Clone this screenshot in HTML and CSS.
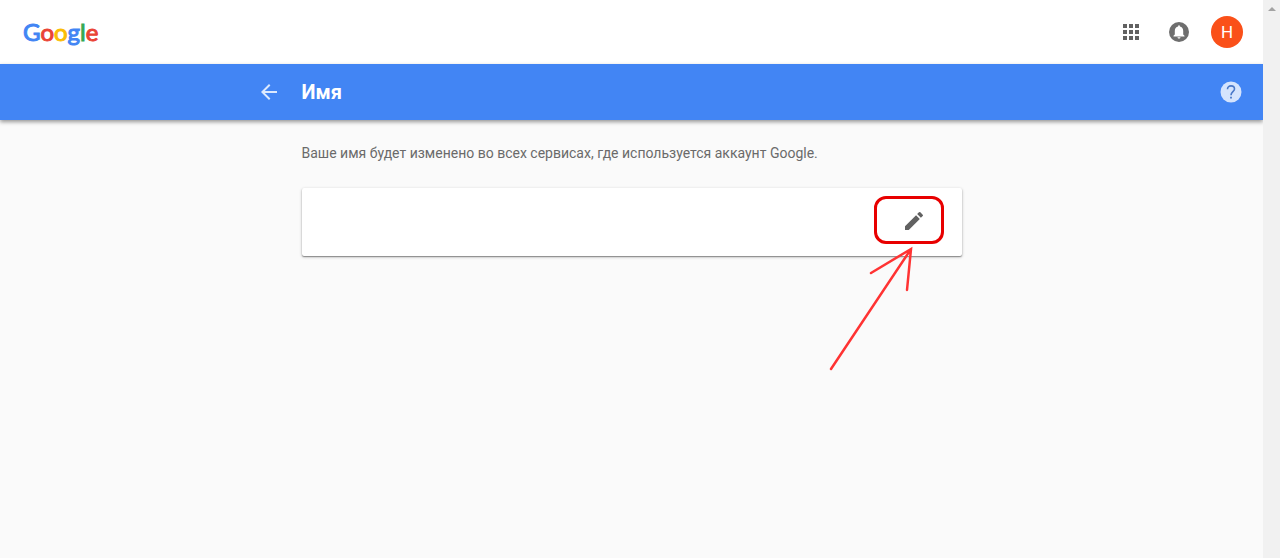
FILE: index.html
```html
<!DOCTYPE html>
<html lang="ru">
<head>
    <meta charset="UTF-8">
    <meta name="viewport" content="width=device-width, initial-scale=1.0">
    <title>Имя</title>
    <link rel="stylesheet" href="styles.css">
</head>
<body>
    <div class="page">
        <header class="topbar">
            <a href="#" class="logo"><span class="blue">G</span><span class="red">o</span><span class="yellow">o</span><span class="blue">g</span><span class="green">l</span><span class="red">e</span></a>
            <div class="topbar-actions">
                <button type="button" class="icon-btn" aria-label="Приложения">
                    <svg width="24" height="24" viewBox="0 0 24 24" fill="#616161">
                        <path d="M4 4h4v4H4zM10 4h4v4h-4zM16 4h4v4h-4zM4 10h4v4H4zM10 10h4v4h-4zM16 10h4v4h-4zM4 16h4v4H4zM10 16h4v4h-4zM16 16h4v4h-4z"/>
                    </svg>
                </button>
                <button type="button" class="icon-btn" aria-label="Уведомления">
                    <svg width="24" height="24" viewBox="0 0 24 24">
                        <circle cx="12" cy="12" r="10" fill="#6e6e6e"/>
                        <path fill="#fff" d="M12 18.5c.9 0 1.5-.5 1.5-1.3h-3c0 .8.6 1.3 1.5 1.3zM16.2 14.6V11c0-2.300-1.200-3.900-3.300-4.400v-.4a.9.9 0 0 0-1.800 0v.4C9 7.100 7.800 8.700 7.800 11v3.600l-1.300 1.200v.6h11v-.6z"/>
                    </svg>
                </button>
                <button type="button" class="avatar" aria-label="Аккаунт">Н</button>
            </div>
        </header>

        <div class="titlebar">
            <div class="titlebar-inner">
                <a href="#" class="back" aria-label="Назад">
                    <svg width="24" height="24" viewBox="0 0 24 24" fill="#dce9fe">
                        <path d="M20 11H7.830l5.590-5.590L12 4l-8 8 8 8 1.410-1.410L7.830 13H20v-2z"/>
                    </svg>
                </a>
                <h1 class="title">Имя</h1>
            </div>
            <button type="button" class="help" aria-label="Справка">
                <svg width="24" height="24" viewBox="0 0 24 24">
                    <circle cx="12" cy="12" r="10.500" fill="#d5e4fd"/>
                    <path fill="none" stroke="#4a78c8" stroke-width="1.600" d="M8.500 9.300C8.500 7.100 10 5.900 12 5.900s3.500 1.200 3.500 3.100c0 2.600-3.500 2.900-3.500 6.200"/>
                    <path fill="#4a78c8" d="M11.100 16.800h1.800v1.800h-1.800z"/>
                </svg>
            </button>
        </div>

        <main class="content">
            <p class="intro">Ваше имя будет изменено во всех сервисах, где используется аккаунт Google.</p>
            <div class="card">
                <button type="button" class="icon-btn" aria-label="Изменить имя">
                    <svg width="24" height="24" viewBox="0 0 24 24" fill="#616161">
                        <path d="M3 17.250V21h3.750L17.810 9.940l-3.750-3.750L3 17.250zM20.710 7.040a1 1 0 0 0 0-1.410l-2.340-2.340a1 1 0 0 0-1.410 0l-1.830 1.830 3.750 3.750 1.830-1.830z"/>
                    </svg>
                </button>
                <div class="mark-box"></div>
                <svg class="mark-arrow" width="90" height="130" viewBox="0 0 90 130" fill="none" stroke="#ff3333" stroke-width="2.500" stroke-linecap="round">
                    <path d="M4 125L84 5M44 29L84 5L80 46"/>
                </svg>
            </div>
        </main>
    </div>
    <div class="scrollbar"></div>
</body>
</html>
```

FILE: styles.css
```css
* {
    box-sizing: border-box;
}

body {
    display: flex;
    min-height: 100vh;
    margin: 0;
    background-color: #fafafa;
    font-family: Roboto, Arial, sans-serif;
}

svg {
    display: block;
}

button {
    padding: 0;
    border: 0;
    background: none;
    font-family: inherit;
    cursor: pointer;
}

.page {
    flex: 1;
    min-width: 0;
}

/* Top bar */
.topbar {
    display: flex;
    justify-content: space-between;
    align-items: center;
    height: 64px;
    padding: 0 20px 0 23px;
    background: #fff;
}

.logo {
    font-family: Lato, sans-serif;
    font-size: 24px;
    line-height: 32px;
    text-decoration: none;
}

.blue {
    color: #4285f4;
}

.red {
    color: #ea4335;
}

.yellow {
    color: #fbbc05;
}

.green {
    color: #34a853;
}

.logo span {
    -webkit-text-stroke: 1px currentColor;
}

.topbar-actions {
    display: flex;
    align-items: center;
}

.icon-btn {
    display: flex;
    justify-content: center;
    align-items: center;
    width: 48px;
    height: 48px;
}

.avatar {
    width: 32px;
    height: 32px;
    margin-left: 8px;
    border-radius: 50%;
    background: #fa5019;
    color: #fff;
    font-size: 17px;
    line-height: 32px;
}

/* Blue title bar */
.titlebar {
    position: relative;
    height: 56px;
    background: #4285f4;
    box-shadow: 0 2px 4px rgba(0, 0, 0, 0.4);
}

.titlebar-inner {
    display: flex;
    align-items: center;
    max-width: 660px;
    height: 100%;
    margin: 0 auto;
}

.back {
    margin-left: -45px;
}

.title {
    margin: 0 0 0 21px;
    color: #fff;
    font-size: 20px;
    font-weight: 700;
    line-height: 24px;
}

.help {
    position: absolute;
    top: 16px;
    right: 20px;
}

/* Content */
.content {
    max-width: 660px;
    margin: 0 auto;
    padding-top: 24px;
}

.intro {
    margin: 0 0 26px;
    color: #6a6a6a;
    font-size: 14px;
    line-height: 18px;
}

.card {
    position: relative;
    display: flex;
    justify-content: flex-end;
    align-items: center;
    height: 68px;
    padding: 0 24px 2px 0;
    border-radius: 2px;
    background: #fff;
    box-shadow: 0 1px 3px rgba(0, 0, 0, 0.3), 0 1px 1px rgba(0, 0, 0, 0.3);
}

/* Red marks over the edit button */
.mark-box {
    position: absolute;
    top: 8px;
    right: 18px;
    width: 70px;
    height: 48px;
    border: 3px solid #e80000;
    border-radius: 12px;
    pointer-events: none;
}

.mark-arrow {
    position: absolute;
    top: 56px;
    right: 45px;
    pointer-events: none;
}

/* Scrollbar track */
.scrollbar {
    position: relative;
    width: 17px;
    background: #f1f1f1;
}

.scrollbar::before {
    content: "";
    display: block;
    width: 0;
    margin: 7px auto 0;
    border: 4px solid transparent;
    border-top: 0;
    border-bottom-color: #a3a3a3;
}
```
